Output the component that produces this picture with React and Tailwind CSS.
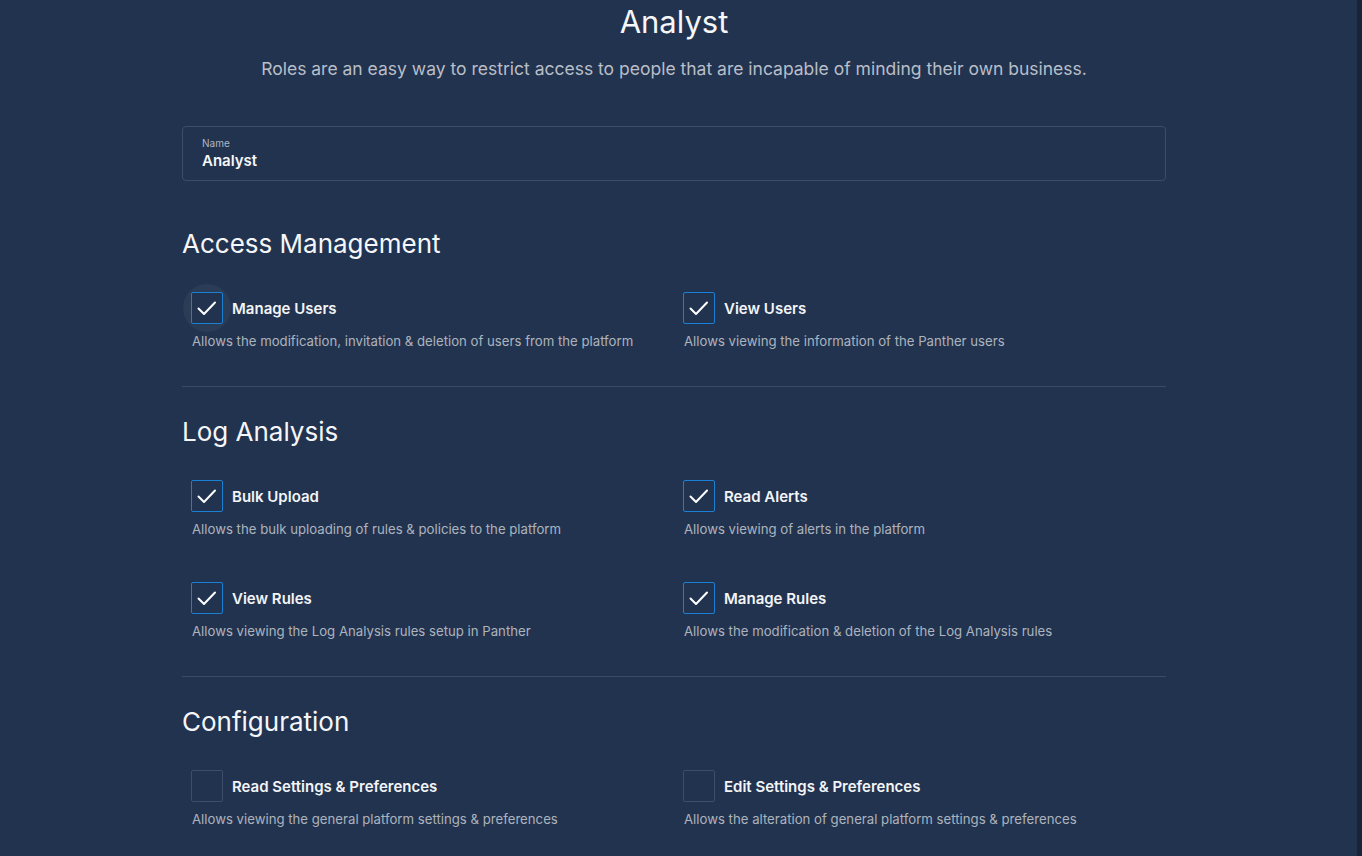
const sections = [
  {
    title: 'Access Management',
    rows: [
      [
        { label: 'Manage Users', desc: 'Allows the modification, invitation & deletion of users from the platform', checked: true, focused: true },
        { label: 'View Users', desc: 'Allows viewing the information of the Panther users', checked: true },
      ],
    ],
  },
  {
    title: 'Log Analysis',
    rows: [
      [
        { label: 'Bulk Upload', desc: 'Allows the bulk uploading of rules & policies to the platform', checked: true },
        { label: 'Read Alerts', desc: 'Allows viewing of alerts in the platform', checked: true },
      ],
      [
        { label: 'View Rules', desc: 'Allows viewing the Log Analysis rules setup in Panther', checked: true },
        { label: 'Manage Rules', desc: 'Allows the modification & deletion of the Log Analysis rules', checked: true },
      ],
    ],
  },
  {
    title: 'Configuration',
    rows: [
      [
        { label: 'Read Settings & Preferences', desc: 'Allows viewing the general platform settings & preferences', checked: false },
        { label: 'Edit Settings & Preferences', desc: 'Allows the alteration of general platform settings & preferences', checked: false },
      ],
    ],
  },
];

function Checkbox({ checked, focused }) {
  return (
    <div className="relative w-8 h-8 shrink-0">
      {focused && (
        <div className="absolute -left-2 -top-2 w-12 h-12 rounded-full bg-[#2b3c57]"></div>
      )}
      <div
        className={
          checked
            ? 'relative w-8 h-8 rounded-[2px] border border-[#1a80d6] bg-[#223350]'
            : 'relative w-8 h-8 rounded-[2px] border border-[#3e4e68] bg-[#223350]'
        }
      >
        {checked && (
          <svg width="32" height="32" viewBox="0 0 32 32" className="absolute -left-px -top-px" fill="none">
            <path d="M7.5 16.5 L13 22 L24 10.5" stroke="#ffffff" strokeWidth="2" strokeLinecap="round" strokeLinejoin="round" />
          </svg>
        )}
      </div>
    </div>
  );
}

function Permission({ item }) {
  return (
    <div className="pl-[9px]">
      <div className="flex items-center gap-[9px] pt-px">
        <Checkbox checked={item.checked} focused={item.focused} />
        <span className="text-[15px] font-semibold text-[#f3f4f6] leading-5 pt-0.5">{item.label}</span>
      </div>
      <p className="mt-2 text-[13.2px] leading-[18px] text-[#adb3bd] pl-px">{item.desc}</p>
    </div>
  );
}

export default function App() {
  return (
    <div className="flex min-h-[856px] bg-[#223350]" style={{ fontFamily: 'Inter, "Noto Sans", sans-serif' }}>
      <main className="flex-1 pr-[9px]">
        <div className="w-[984px] mx-auto pb-10">
          {/* Header */}
          <h1 className="text-center text-[31px] leading-[44px] text-[#f5f6f8] font-normal">Analyst</h1>
          <p className="mt-[13px] text-center text-[17.5px] leading-6 text-[#b9bec7]">
            Roles are an easy way to restrict access to people that are incapable of minding their own business.
          </p>

          {/* Name field */}
          <div className="mt-[45px] h-[55px] rounded border border-[#3c4d68] px-[19px] pt-[10px]">
            <div className="text-[10px] leading-3 text-[#b0b6c0]">Name</div>
            <div className="mt-[2px] text-[15px] leading-5 font-semibold text-[#f5f6f8]">Analyst</div>
          </div>

          {sections.map((section, i) => (
            <section key={section.title}>
              {i > 0 && <div className="mt-[36px] border-t border-[#3a4b65]"></div>}
              <h2 className={i > 0 ? 'mt-[29px] text-[26px] leading-8 text-[#f5f6f8]' : 'mt-[47px] text-[26px] leading-8 text-[#f5f6f8]'}>
                {section.title}
              </h2>
              <div className="mt-[31px] flex flex-col gap-[43px]">
                {section.rows.map((row, j) => (
                  <div key={j} className="grid grid-cols-2">
                    {row.map((item) => (
                      <Permission key={item.label} item={item} />
                    ))}
                  </div>
                ))}
              </div>
            </section>
          ))}
        </div>
      </main>
      <div className="w-[5px] bg-[#1a2438]"></div>
    </div>
  );
}
